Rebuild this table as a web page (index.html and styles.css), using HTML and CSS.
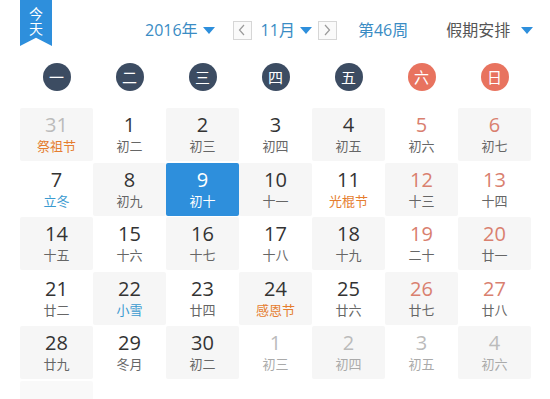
FILE: index.html
```html
<!DOCTYPE html>
<html lang="zh">
<head>
<meta charset="utf-8">
<title>日历</title>
<link rel="stylesheet" href="styles.css">
</head>
<body>
<div class="cal">
  <div class="head">
    <div class="badge"><span class="badge-text">今天</span></div>
    <div class="sel year"><span class="txt blue">2016年</span><i class="caret"></i></div>
    <button class="arrow prev"><svg width="8" height="12" viewBox="0 0 8 12"><polyline points="6,1 1.5,6 6,11" fill="none" stroke="#9a9a9a" stroke-width="1.2"/></svg></button>
    <div class="sel month"><span class="txt blue">11月</span><i class="caret"></i></div>
    <button class="arrow next"><svg width="8" height="12" viewBox="0 0 8 12"><polyline points="2,1 6.5,6 2,11" fill="none" stroke="#9a9a9a" stroke-width="1.2"/></svg></button>
    <div class="week txt blue">第46周</div>
    <div class="sel holiday"><span class="txt dark">假期安排</span><i class="caret"></i></div>
  </div>

  <div class="weekdays">
    <div class="wd"><span>一</span></div>
    <div class="wd"><span>二</span></div>
    <div class="wd"><span>三</span></div>
    <div class="wd"><span>四</span></div>
    <div class="wd"><span>五</span></div>
    <div class="wd we"><span>六</span></div>
    <div class="wd we"><span>日</span></div>
  </div>

  <div class="grid">
    <div class="cell g other"><b>31</b><em class="fest">祭祖节</em></div>
    <div class="cell"><b>1</b><em>初二</em></div>
    <div class="cell g"><b>2</b><em>初三</em></div>
    <div class="cell"><b>3</b><em>初四</em></div>
    <div class="cell g"><b>4</b><em>初五</em></div>
    <div class="cell red"><b>5</b><em>初六</em></div>
    <div class="cell g red"><b>6</b><em>初七</em></div>

    <div class="cell"><b>7</b><em class="term">立冬</em></div>
    <div class="cell g"><b>8</b><em>初九</em></div>
    <div class="cell sel-day"><b>9</b><em>初十</em></div>
    <div class="cell g"><b>10</b><em>十一</em></div>
    <div class="cell"><b>11</b><em class="fest">光棍节</em></div>
    <div class="cell g red"><b>12</b><em>十三</em></div>
    <div class="cell red"><b>13</b><em>十四</em></div>

    <div class="cell g"><b>14</b><em>十五</em></div>
    <div class="cell"><b>15</b><em>十六</em></div>
    <div class="cell g"><b>16</b><em>十七</em></div>
    <div class="cell"><b>17</b><em>十八</em></div>
    <div class="cell g"><b>18</b><em>十九</em></div>
    <div class="cell red"><b>19</b><em>二十</em></div>
    <div class="cell g red"><b>20</b><em>廿一</em></div>

    <div class="cell"><b>21</b><em>廿二</em></div>
    <div class="cell g"><b>22</b><em class="term">小雪</em></div>
    <div class="cell"><b>23</b><em>廿四</em></div>
    <div class="cell g"><b>24</b><em class="fest">感恩节</em></div>
    <div class="cell"><b>25</b><em>廿六</em></div>
    <div class="cell g red"><b>26</b><em>廿七</em></div>
    <div class="cell red"><b>27</b><em>廿八</em></div>

    <div class="cell g"><b>28</b><em>廿九</em></div>
    <div class="cell"><b>29</b><em>冬月</em></div>
    <div class="cell g"><b>30</b><em>初二</em></div>
    <div class="cell other"><b>1</b><em>初三</em></div>
    <div class="cell g other"><b>2</b><em>初四</em></div>
    <div class="cell other"><b>3</b><em>初五</em></div>
    <div class="cell g other"><b>4</b><em>初六</em></div>

    <div class="cell ghost"></div>
  </div>
</div>
</body>
</html>
```
FILE: styles.css
```css
* { box-sizing: border-box; }
html, body { margin: 0; padding: 0; background: #fff; }
body {
  font-family: "Open Sans", "Noto Sans CJK SC", sans-serif;
  color: #333;
}
.cal { width: 550px; }

.head {
  display: flex;
  align-items: center;
  height: 60px;
  padding-left: 20px;
}
.badge {
  align-self: flex-start;
  width: 32px;
  height: 46px;
  background: #2e8fdc;
  display: flex;
  justify-content: center;
  padding-top: 7px;
  clip-path: polygon(0 0, 100% 0, 100% 100%, 50% 82%, 0 100%);
}
.badge-text {
  writing-mode: vertical-rl;
  color: #fff;
  font-family: "Noto Sans CJK SC", sans-serif;
  font-size: 14px;
  line-height: 16px;
  letter-spacing: 1px;
}
.txt { font-size: 16px; line-height: 20px; }
.blue { color: #3a8cc4; }
.dark { color: #555; }
.sel { display: flex; align-items: center; }
.caret {
  display: block;
  width: 0; height: 0;
  margin-left: 5px;
  border-left: 6px solid transparent;
  border-right: 6px solid transparent;
  border-top: 7px solid #2e8fdc;
}
.year { margin-left: 93px; }
.arrow {
  width: 19px;
  height: 19px;
  padding: 0;
  border: 1px solid #d6d6d6;
  background: #fafafa;
  display: flex;
  align-items: center;
  justify-content: center;
}
.prev { margin-left: 18px; }
.month { margin-left: 9px; }
.next { margin-left: 6px; }
.week { margin-left: 21px; }
.holiday { margin-left: 38px; }
.holiday .caret { margin-left: 11px; }

.weekdays {
  display: grid;
  grid-template-columns: repeat(7, 73px);
  margin: 3px 0 0 20px;
}
.wd { display: flex; justify-content: center; }
.wd span {
  width: 28px;
  height: 28px;
  border-radius: 50%;
  background: #3c4c62;
  color: #fff;
  font-family: "Noto Sans CJK SC", sans-serif;
  font-size: 15px;
  line-height: 28px;
  text-align: center;
}
.wd.we span { background: #e8735f; }

.grid {
  display: grid;
  grid-template-columns: repeat(7, 73px);
  grid-auto-rows: 53px;
  row-gap: 1.5px;
  margin: 17px 0 0 20px;
}
.cell {
  display: flex;
  flex-direction: column;
  align-items: center;
  padding-top: 6px;
  border-radius: 2px;
  background: #fff;
}
.cell.g { background: #f6f6f6; }
.cell b {
  font-weight: normal;
  font-size: 20px;
  line-height: 22px;
  color: #333;
}
.cell em {
  font-style: normal;
  font-family: "Noto Sans CJK SC", sans-serif;
  font-size: 13px;
  line-height: 16px;
  margin-top: 2px;
  color: #666;
}
.cell.red b { color: #d9806f; }
.cell em.fest { color: #e57d2f; }
.cell em.term { color: #3a9ad0; }
.cell.other b { color: #bbb; }
.cell.other em { color: #aaa; }
.cell.other em.fest { color: #e57d2f; }
.cell.sel-day { background: #2e8fdc; }
.cell.sel-day b, .cell.sel-day em { color: #fff; }
.cell.ghost { background: #f9f9f9; }
```
